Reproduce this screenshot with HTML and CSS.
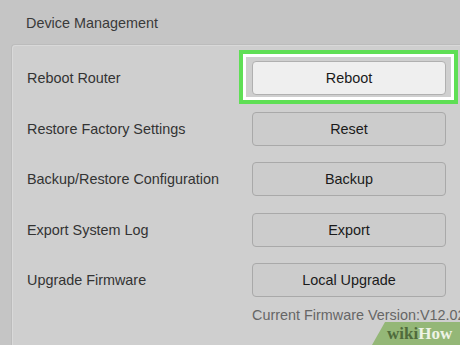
FILE: index.html
```html
<!DOCTYPE html>
<html>
<head>
<meta charset="utf-8">
<link rel="stylesheet" href="styles.css">
</head>
<body>
<div class="page">
  <div class="title">Device Management</div>
  <div class="panel">
    <div class="row">
      <div class="label">Reboot Router</div>
      <div class="cell"><button class="btn btn-primary">Reboot</button><span class="highlight"></span></div>
    </div>
    <div class="row">
      <div class="label">Restore Factory Settings</div>
      <div class="cell"><button class="btn">Reset</button></div>
    </div>
    <div class="row">
      <div class="label">Backup/Restore Configuration</div>
      <div class="cell"><button class="btn">Backup</button></div>
    </div>
    <div class="row">
      <div class="label">Export System Log</div>
      <div class="cell"><button class="btn">Export</button></div>
    </div>
    <div class="row">
      <div class="label">Upgrade Firmware</div>
      <div class="cell"><button class="btn">Local Upgrade</button></div>
    </div>
    <div class="version">Current Firmware Version:V12.02</div>
  </div>
</div>
<div class="wikihow"><span class="wiki">wiki</span><span class="how">How</span></div>
</body>
</html>
```
FILE: styles.css
```css
html, body {
  margin: 0;
  padding: 0;
  width: 460px;
  height: 345px;
  overflow: hidden;
  background: #c5c5c5;
  font-family: "Liberation Sans", Arial, sans-serif;
}
.page {
  position: relative;
  width: 460px;
  height: 345px;
  overflow: hidden;
}
.title {
  height: 44px;
  padding-left: 26px;
  box-sizing: border-box;
  line-height: 46px;
  font-size: 14.4px;
  color: #3a3a3a;
}
.panel {
  margin-left: 11px;
  width: 480px;
  height: 320px;
  background: #cfcfcf;
  border-top: 1px solid #bcbcbc;
  border-left: 1px solid #bcbcbc;
  border-top-left-radius: 4px;
  box-shadow: inset 1px 1px 0 #d9d9d9;
  padding: 8px 0 0 15px;
  box-sizing: border-box;
}
.row {
  display: grid;
  grid-template-columns: 225px 194px;
  align-items: center;
  height: 50.5px;
}
.label {
  font-size: 14.4px;
  color: #333;
}
.cell {
  position: relative;
  height: 34px;
}
.btn {
  display: block;
  width: 194px;
  height: 34px;
  margin: 0;
  padding: 0;
  border: 1px solid #a9a9a9;
  border-radius: 4px;
  background: #cccccc;
  font-family: "Liberation Sans", Arial, sans-serif;
  font-size: 14.4px;
  color: #1a1a1a;
}
.btn-primary {
  background: #efefef;
  border-color: #b0b0b0;
}
.highlight {
  position: absolute;
  left: -13px;
  right: -12px;
  top: -11px;
  bottom: -9px;
  border: 4px solid #5fdf55;
  box-shadow: inset 0 0 0 3px #ffffff;
  pointer-events: none;
}
.version {
  margin-left: 225px;
  margin-top: 1px;
  font-size: 14.4px;
  color: #666;
  white-space: nowrap;
}
.wikihow {
  position: absolute;
  right: 0;
  bottom: 0;
  width: 88px;
  height: 23px;
  background: #94b777;
  clip-path: polygon(13px 0, 100% 0, 100% 100%, 0 100%);
  font-family: "Liberation Serif", "Times New Roman", serif;
  font-weight: bold;
  font-size: 17px;
  line-height: 23px;
  padding-left: 15px;
  box-sizing: border-box;
  white-space: nowrap;
}
.wiki { color: #4f6b3c; }
.how { color: #eef3e6; }
```
